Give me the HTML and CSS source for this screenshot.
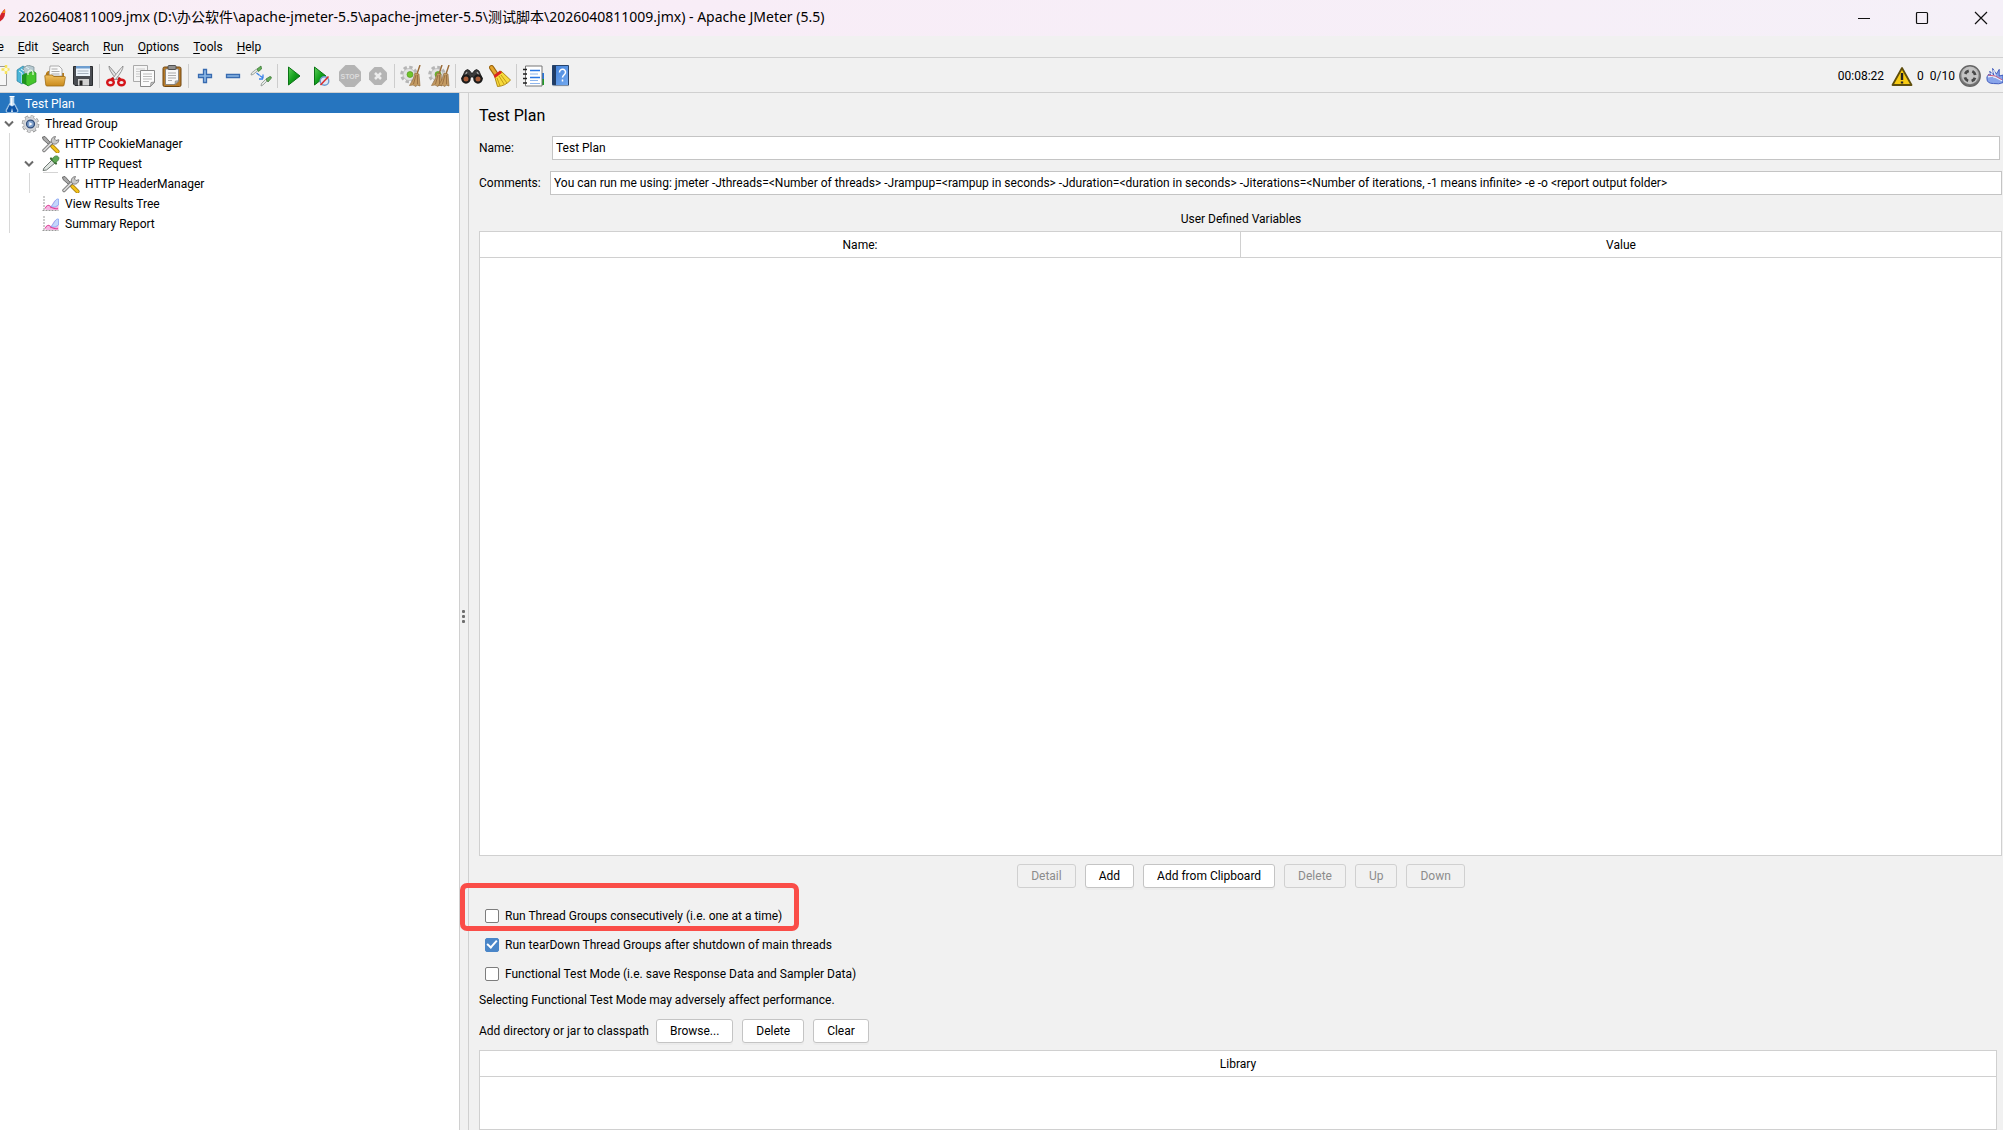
FILE: index.html
```html
<!DOCTYPE html>
<html lang="en">
<head>
<meta charset="utf-8">
<title>2026040811009.jmx - Apache JMeter (5.5)</title>
<link rel="stylesheet" href="styles.css">
</head>
<body>
<svg class="sprite" aria-hidden="true">
  <defs>
    <linearGradient id="g-green" x1="0" y1="0" x2="1" y2="1"><stop offset="0" stop-color="#5fd05a"/><stop offset=".5" stop-color="#12a01c"/><stop offset="1" stop-color="#066a10"/></linearGradient>
    <linearGradient id="g-gold" x1="0" y1="0" x2="0" y2="1"><stop offset="0" stop-color="#f0c060"/><stop offset="1" stop-color="#c98a1c"/></linearGradient>
    <linearGradient id="g-blue" x1="0" y1="0" x2="1" y2="1"><stop offset="0" stop-color="#3f7fd8"/><stop offset="1" stop-color="#74aaf0"/></linearGradient>
    <linearGradient id="g-grey" x1="0" y1="0" x2="0" y2="1"><stop offset="0" stop-color="#c8c8c8"/><stop offset="1" stop-color="#6c6c6c"/></linearGradient>
    <symbol id="i-tools" viewBox="0 0 19 18">
      <path d="M1.500 2 4 1.500 12 10.500 10.500 12 2 4.500Z" fill="#a9a9a9" stroke="#555" stroke-width=".8"/>
      <path d="M3 15.500 11.500 7" stroke="#666" stroke-width="3.400" stroke-linecap="round"/>
      <path d="M3 15.500 11.500 7" stroke="#d8d8d8" stroke-width="1.800" stroke-linecap="round"/>
      <path d="M10.500 7.500c-1-3 1-6 4-6l-1 2.500 1.500 1.500 2.800-.8c0 3-2.300 5-5.300 4.300Z" fill="#c8c8c8" stroke="#666" stroke-width=".8"/>
      <path d="m11.500 11.500 5 5" stroke="#9a7410" stroke-width="4" stroke-linecap="round"/>
      <path d="m11.500 11.500 5 5" stroke="#f3c21a" stroke-width="2.600" stroke-linecap="round"/>
    </symbol>
    <symbol id="i-chart" viewBox="0 0 18 18">
      <path d="M2.500 1v14.500M1 15.500h16" stroke="#999" stroke-width="1" stroke-dasharray="2 1"/>
      <path d="M4 15c1-4 3-5 5-3l3-5c2-3 4-1 5-1v9Z" fill="#f4b3e2"/>
      <path d="m9.500 12 4-6q2-3 3.500-2v6q-3 3-7.500 2Z" fill="#c3d6fb" stroke="#7f9df0" stroke-width=".7"/>
      <path d="M3.500 13.500C6 9 8 9.500 9.500 12.500c2-.5 2.500 2 7 1" fill="none" stroke="#dd3d97" stroke-width="1.100"/>
    </symbol>
    <symbol id="i-dropper" viewBox="0 0 19 18">
      <path d="M2 17.500h15" stroke="#d4d4d4"/>
      <path d="m2 15.500 1-2.500 8-8 3 3-8.500 7Z" fill="#dfe5e1" stroke="#6f7873"/>
      <path d="m10 3.500 5 5" stroke="#3c6b35" stroke-width="2.200" stroke-linecap="round"/>
      <path d="M11 5c1-3.500 4-5 6-3.500s.5 4.500-3 6.500Z" fill="#5ea854" stroke="#41793a" stroke-width=".8"/>
    </symbol>
    <symbol id="i-gear" viewBox="0 0 20 20">
      <circle cx="10" cy="10" r="8.200" fill="none" stroke="#8d8d8d" stroke-width="3.200" stroke-dasharray="3.740 2.700"/>
      <circle cx="10" cy="10" r="7.600" fill="#d5d7da" stroke="#9b9b9b" stroke-width=".7"/>
      <circle cx="10" cy="10" r="8" fill="none" stroke="#d5d7da" stroke-width="2.200" stroke-dasharray="2.800 3.483" stroke-dashoffset="-.4"/>
      <circle cx="10" cy="10" r="4.400" fill="#7ea0cc" stroke="#314c78" stroke-width="1.400"/>
      <path d="m8.700 7.700 3.600 2.300-3.600 2.300Z" fill="#fff"/>
    </symbol>
    <symbol id="i-flask" viewBox="0 0 14 18">
      <path d="M5 1.500h4v6l4 7.500q.5 2.500-1.500 2.500h-9Q.5 17.500 1 15l4-7.500Z" fill="#cfe4f6" stroke="#8fb9de" stroke-width=".7"/>
      <path d="m4.500 10-3 6 1 1h3.500l1-4 1 4h3.500l1-1-3-6-2.500 1.500Z" fill="#0b54a8"/>
      <path d="M4.500 1.500h5M6.300 3v7" stroke="#fff"/>
    </symbol>
    <symbol id="i-arrow" viewBox="0 0 10 8"><path d="m1 1.500 4 4 4-4" fill="none" stroke="#6a6a6a" stroke-width="2"/></symbol>
    <symbol id="i-gearbroom" viewBox="0 0 22 22">
      <circle cx="9" cy="9.500" r="7" fill="none" stroke="#b5b5b5" stroke-width="3.600" stroke-dasharray="3.200 2.298"/>
      <circle cx="9" cy="9.500" r="6" fill="#e2e2e2" stroke="#bbb" stroke-width=".8"/>
      <circle cx="10" cy="9.500" r="3" fill="#71c52b" stroke="#4b8d1a" stroke-width=".6"/>
    </symbol>
    <symbol id="i-brush" viewBox="0 0 12 22">
      <path d="M11 0 8 9" stroke="#9a6a34" stroke-width="1.400"/>
      <path d="m6 8 4 1 1 12-3-1-1 1.500L4 20l-3.500.5Q5 14 6 8Z" fill="#c39a62" stroke="#8a6536" stroke-width=".6"/>
      <path d="m7 10-2.500 9M8.500 10v9" stroke="#866037" stroke-width=".7"/>
    </symbol>
  </defs>
</svg>

<header class="titlebar">
  <svg class="feather-mark" viewBox="0 0 6 16" aria-hidden="true"><path d="M-2 14C-1 8 1 3 5 0q1 6-2 10Z" fill="#d3222a"/><path d="M2 4 5 0v4Z" fill="#f28b1d"/></svg>
  <h1 class="window-title">2026040811009.jmx (D:\办公软件\apache-jmeter-5.5\apache-jmeter-5.5\测试脚本\2026040811009.jmx) - Apache JMeter (5.5)</h1>
  <div class="window-controls">
    <button type="button" aria-label="Minimize"><svg viewBox="0 0 14 14"><path d="M1 7.500h12" stroke="#111" fill="none"/></svg></button>
    <button type="button" aria-label="Maximize"><svg viewBox="0 0 14 14"><rect x="1.500" y="1.500" width="11" height="11" rx="1" stroke="#111" stroke-width="1.200" fill="none"/></svg></button>
    <button type="button" aria-label="Close"><svg viewBox="0 0 14 14"><path d="m1 1 12 12M13 1 1 13" stroke="#111" stroke-width="1.200" fill="none"/></svg></button>
  </div>
</header>

<nav class="menubar">
  <button type="button"><u>F</u>ile</button>
  <button type="button"><u>E</u>dit</button>
  <button type="button"><u>S</u>earch</button>
  <button type="button"><u>R</u>un</button>
  <button type="button"><u>O</u>ptions</button>
  <button type="button"><u>T</u>ools</button>
  <button type="button"><u>H</u>elp</button>
</nav>

<div class="toolbar">
  <button type="button" aria-label="New"><svg viewBox="0 0 22 22"><path d="M3 1.500h15.500v19H3Z" fill="#f6f6f6" stroke="#999"/><path d="M18 0v9M13.500 4.500h8" stroke="#f6e25a" stroke-width="2.500"/><circle cx="18" cy="4.500" r="1.800" fill="#fffbd0"/></svg></button>
  <button type="button" aria-label="Templates"><svg viewBox="0 0 22 22"><path d="m1 5 6-4 3 2v13l-4 3-5-3Z" fill="#4bb6d8" stroke="#2e7f9e" stroke-width=".7"/><path d="m7 3 5-3 6 2v8H9Z" fill="#b6c9d0" stroke="#75898f" stroke-width=".7"/><path d="m3 6 3 2v10M5 4l3 2M10 2l3 2" fill="none" stroke="#e5f6fb"/><path d="m6 10 4-2 2 1v12l-6-3Z" fill="#1e9420"/><path d="m10 10 7-4 3 2v9l-8 4-2-2Z" fill="#46c52c" stroke="#1c8a1c" stroke-width=".7"/><path d="M12 10V7q3-4 5 0v3" fill="none" stroke="#e9fce0" stroke-width="1.200"/></svg></button>
  <button type="button" aria-label="Open"><svg viewBox="0 0 22 22"><path d="M2 19V8l2-2h5l1 2h10v11Z" fill="#b67a19"/><path d="M6 1h9l3 3v7H5Z" fill="#fafafa" stroke="#9b9b9b" stroke-width=".8"/><path d="M7.500 4h6M7.500 6.500h8M7.500 9h8" stroke="#aaa"/><path d="M.8 11q0-1 1-1H8l2 1.500h10.500q1 0 .8 1L20 20q0 1-1 1H3q-1 0-1.200-1Z" fill="url(#g-gold)" stroke="#a06c14" stroke-width=".8"/></svg></button>
  <button type="button" aria-label="Save"><svg viewBox="0 0 22 22"><path d="M1.500 1.500h19v19H3l-1.500-1.500Z" fill="#4a4d52" stroke="#2b2d30"/><path d="M4 1h14v10H4Z" fill="#edf4fb"/><path d="M4 1h14v2.500H4Z" fill="#6e9ed0"/><path d="M5.500 6h11M5.500 8.500h11" stroke="#a8b3bf"/><path d="M6 14h11v6.500H6Z" fill="#d2d2d2"/><path d="M7.500 15.500h3v5h-3Z" fill="#222"/></svg></button>
  <span class="separator"></span>
  <button type="button" aria-label="Cut"><svg viewBox="0 0 22 22"><path d="M4 1q-.5 4 8 14l2-2Q6 3 4 1Z" fill="#e2e2e2" stroke="#888" stroke-width=".9"/><path d="M18 1q.5 4-8 14l-2-2Q16 3 18 1Z" fill="#f0f0f0" stroke="#888" stroke-width=".9"/><path d="m8.500 13-2 2M13.500 13l2 2" stroke="#c60f14" stroke-width="3"/><ellipse cx="5.500" cy="17.500" rx="3.300" ry="2.800" fill="#eee" stroke="#d5151b" stroke-width="2.400"/><ellipse cx="16.500" cy="17.500" rx="3.300" ry="2.800" fill="#eee" stroke="#d5151b" stroke-width="2.400"/></svg></button>
  <button type="button" aria-label="Copy"><svg viewBox="0 0 22 22"><path d="M.5.500h14v16H.5Z" fill="#f5f5f5" stroke="#aaa"/><path d="M3 4h9M3 6.500h4M3 9h4M3 11.500h4" stroke="#ccc"/><path d="M7.500 5.500h14v12l-4 4h-10Z" fill="#fbfbfb" stroke="#888"/><path d="M10 9h9M10 11.500h9M10 14h9M10 16.500h6" stroke="#bbb"/><path d="m17.500 21.500.5-4 3.500-.5Z" fill="#ccc" stroke="#888" stroke-width=".8"/></svg></button>
  <button type="button" aria-label="Paste"><svg viewBox="0 0 22 22"><rect x="2" y="2" width="18" height="19.500" rx="1.500" fill="#b77a28" stroke="#704610"/><path d="M4.500 4h13v12l-3.500 3.500H4.500Z" fill="#f8f8f8" stroke="#777" stroke-width=".8"/><rect x="7" y=".5" width="8" height="4" rx="1" fill="#8f8f8f" stroke="#505050"/><path d="M7 8h8M7 10.500h8M7 13h8M7 15.500h4" stroke="#aaa"/><path d="m14 19.500.3-3.500 3.500-.3Z" fill="#bbb" stroke="#777" stroke-width=".6"/></svg></button>
  <span class="separator"></span>
  <button type="button" aria-label="Expand all"><svg viewBox="0 0 22 22"><path d="M9.500 4.500h3v5h5v3h-5v5h-3v-5h-5v-3h5Z" fill="#8db8e6" stroke="#386bb0" stroke-width="1.300"/></svg></button>
  <button type="button" aria-label="Collapse all"><svg viewBox="0 0 22 22"><path d="M4.500 9.500h13v3h-13Z" fill="#8db8e6" stroke="#386bb0" stroke-width="1.300"/></svg></button>
  <button type="button" aria-label="Toggle"><svg viewBox="0 0 22 22"><path d="m1 10 .5-2 5-4 1.500 1.500-5 4ZM11 21l.5-2.500 4-4 1.500 1.500-4 4Z" fill="#e5e9e6" stroke="#8b9690" stroke-width=".8"/><path d="m7 4 4-3 .5 3-3 2.500ZM16 14l4-2.500q2 0 1 2L18 17Z" fill="#63b058" stroke="#3f7b39" stroke-width=".8"/><path d="m6.500 8 6.500 5M13 9.500V14H8.500" fill="none" stroke="#3b83ea" stroke-width="1.300" stroke-dasharray="4 .5"/></svg></button>
  <span class="separator"></span>
  <button type="button" aria-label="Start"><svg viewBox="0 0 22 22"><path d="M5.500 2v18L17 11Z" fill="url(#g-green)" stroke="#0b7315"/></svg></button>
  <button type="button" aria-label="Start no pauses"><svg viewBox="0 0 22 22"><path d="M3.500 2v18L15 11Z" fill="url(#g-green)" stroke="#0b7315"/><circle cx="13.500" cy="16" r="4.300" fill="#dce9f7" stroke="#6d9cd0" stroke-width="1.400"/><path d="m9.500 20 8-8.500" stroke="#db2b2b" stroke-width="1.500"/></svg></button>
  <button type="button" aria-label="Stop" disabled><svg viewBox="0 0 22 22"><path d="M6.500 0h9L22 6.500v9L15.500 22h-9L0 15.500v-9Z" fill="#b4b4b4"/><text x="11" y="14" class="stop-text">STOP</text></svg></button>
  <button type="button" aria-label="Shutdown" disabled><svg viewBox="0 0 22 22"><path d="M7.500 2h7L20 7.500v7L14.500 20h-7L2 14.500v-7Z" fill="#b4b4b4"/><path d="m8 8 6 6m0-6-6 6" stroke="#ececec" stroke-width="2.500"/></svg></button>
  <span class="separator"></span>
  <button type="button" aria-label="Clear"><svg viewBox="0 0 22 22"><use href="#i-gearbroom" width="22" height="22"/><use href="#i-brush" x="9" width="12" height="22"/></svg></button>
  <button type="button" aria-label="Clear all"><svg viewBox="0 0 22 22"><use href="#i-gearbroom" width="22" height="22"/><use href="#i-brush" x="3" width="12" height="22"/><use href="#i-brush" x="10" width="12" height="22"/></svg></button>
  <span class="separator"></span>
  <button type="button" aria-label="Search"><svg viewBox="0 0 22 22"><path d="M4 6q2.500-3 5 0l1 2h2l1-2q2.500-3 5 0l3.500 8h-8L12 12h-2l-1.500 2H.5Z" fill="#3b3b3b" stroke="#111" stroke-width=".7"/><path d="m6 7-2.500 4M16 7l2.500 4" stroke="#aaa" stroke-width="1.300"/><circle cx="5" cy="14" r="3.600" fill="#a85c38" stroke="#1b1b1b" stroke-width="2.200"/><circle cx="17" cy="14" r="3.600" fill="#a85c38" stroke="#1b1b1b" stroke-width="2.200"/></svg></button>
  <button type="button" aria-label="Reset search"><svg viewBox="0 0 22 22"><path d="m2.500 2.500 4 6" stroke="#9c650c" stroke-width="5" stroke-linecap="round"/><path d="m2.500 2.500 4 6" stroke="#e4a62e" stroke-width="3" stroke-linecap="round"/><path d="M5.500 11 12 6l9.500 9q-5 6-13 6.500Z" fill="#f7da3c" stroke="#a98009" stroke-width=".9"/><path d="m8 13 3 8M10 11l5 8M12 10l6 8" stroke="#c19b16"/><path d="m4.500 10.500 6.500-5 2 2.300-7 5.200Z" fill="#dc251f"/></svg></button>
  <span class="separator"></span>
  <button type="button" aria-label="Function helper"><svg viewBox="0 0 22 22"><path d="M20 8h2v6h-2Z" fill="#2676de"/><path d="M20 14h2v6h-2Z" fill="#1f9a27"/><path d="M3.500 1h16.500v20H3.500Z" fill="#fff" stroke="#777"/><path d="M8 5.500h10M8 12.500h10" stroke="#2b78e4" stroke-width="1.400"/><path d="M8 9h8M8 15.500h8M8 18.500h10" stroke="#8fb6ec"/><path d="M1 4.500h4M1 9h4M1 13.500h4M1 18h4" stroke="#222" stroke-width="1.500"/></svg></button>
  <button type="button" aria-label="Help"><svg viewBox="0 0 22 22"><path d="M2.500.500h16v20h-14l-2-1Z" fill="url(#g-blue)" stroke="#27446d"/><path d="M2.500.500h3.500v20H2.500Z" fill="#213d66"/><path d="M3 21h16" stroke="#ddd"/><path d="M9.500 7.500c0-4.500 6.500-4 6 0-.3 2.500-3 2.500-3 5M12.500 14.500v2" fill="none" stroke="#fff" stroke-width="1.500"/></svg></button>

  <div class="status">
    <span class="elapsed">00:08:22</span>
    <button type="button" class="warnings"><svg viewBox="0 0 22 22"><path d="M11 3 1.500 20h19Z" fill="#f8cb12" stroke="#5f4e0b" stroke-width="1.800" stroke-linejoin="round"/><path d="M11 8v7M11 16.500v2" stroke="#222" stroke-width="2.400"/></svg><span>0</span></button>
    <span class="threads">0/10</span>
    <svg class="status-icon" viewBox="0 0 22 22"><circle cx="11" cy="11" r="10.200" fill="url(#g-grey)" stroke="#666" stroke-width="1.400"/><circle cx="11" cy="11" r="8.200" fill="#c4c4c4"/><circle cx="11" cy="11" r="5.300" fill="none" stroke="#494949" stroke-width="2.800" stroke-dasharray="4.600 3.725" stroke-dashoffset="-1.800"/></svg>
    <svg class="logo" viewBox="0 0 18 22"><path d="M1 12 3 9l2 2-1-5 4 4-1-7 4 6 3-5v7l4-1v8q-4 2-10 1-7 0-7-5Z" fill="#88a4ea" stroke="#2f4cb5" stroke-width=".9"/><path d="m2 12 5-1 10 5M8 5l2 6M5 8l4 5" fill="none" stroke="#e8eefc" stroke-width="1.400"/><path d="m2 10 8 1 7 4" fill="none" stroke="#d25b79"/></svg>
  </div>
</div>

<main class="workspace">
  <ul class="tree">
    <li class="node root selected"><svg class="flask"><use href="#i-flask"/></svg>Test Plan</li>
    <li>
      <div class="node"><svg class="twisty"><use href="#i-arrow"/></svg><svg class="icon"><use href="#i-gear"/></svg>Thread Group</div>
      <ul class="branch">
        <li class="node leaf"><svg class="icon"><use href="#i-tools"/></svg>HTTP CookieManager</li>
        <li>
          <div class="node"><svg class="twisty"><use href="#i-arrow"/></svg><svg class="icon"><use href="#i-dropper"/></svg>HTTP Request</div>
          <ul class="branch">
            <li class="node leaf"><svg class="icon"><use href="#i-tools"/></svg>HTTP HeaderManager</li>
          </ul>
        </li>
        <li class="node leaf"><svg class="icon"><use href="#i-chart"/></svg>View Results Tree</li>
        <li class="node leaf"><svg class="icon"><use href="#i-chart"/></svg>Summary Report</li>
      </ul>
    </li>
  </ul>

  <div class="splitter"><i></i><i></i><i></i></div>

  <section class="panel">
    <h2>Test Plan</h2>
    <div class="field name-field"><label for="name">Name:</label><input id="name" type="text" value="Test Plan"></div>
    <div class="field"><label for="comments">Comments:</label><input id="comments" type="text" value="You can run me using: jmeter -Jthreads=&lt;Number of threads&gt; -Jrampup=&lt;rampup in seconds&gt; -Jduration=&lt;duration in seconds&gt; -Jiterations=&lt;Number of iterations, -1 means infinite&gt; -e -o &lt;report output folder&gt;"></div>

    <h3>User Defined Variables</h3>
    <div class="grid-box variables">
      <table aria-label="User Defined Variables"><thead><tr><th>Name:</th><th>Value</th></tr></thead></table>
    </div>
    <div class="buttons">
      <button type="button" disabled>Detail</button>
      <button type="button">Add</button>
      <button type="button">Add from Clipboard</button>
      <button type="button" disabled>Delete</button>
      <button type="button" disabled>Up</button>
      <button type="button" disabled>Down</button>
    </div>

    <div class="options">
      <div class="marked"><label><input type="checkbox">Run Thread Groups consecutively (i.e. one at a time)</label></div>
      <label><input type="checkbox" checked>Run tearDown Thread Groups after shutdown of main threads</label>
      <label><input type="checkbox">Functional Test Mode (i.e. save Response Data and Sampler Data)</label>
    </div>
    <p>Selecting Functional Test Mode may adversely affect performance.</p>
    <div class="classpath">
      <span>Add directory or jar to classpath</span>
      <button type="button">Browse...</button>
      <button type="button">Delete</button>
      <button type="button">Clear</button>
    </div>
    <div class="grid-box library">
      <table aria-label="Classpath"><thead><tr><th>Library</th></tr></thead></table>
    </div>
  </section>
</main>
</body>
</html>
```
FILE: styles.css
```css
*, *::before, *::after { box-sizing: border-box; }

body {
  margin: 0;
  min-height: 100vh;
  display: flex;
  flex-direction: column;
  overflow-x: hidden;
  background: #f1f1f1;
  color: #000;
  font: 12px/20px Roboto, "Noto Sans CJK SC", sans-serif;
}

button, input { font: inherit; color: inherit; }
h1, h2, h3, p, ul { margin: 0; padding: 0; font-weight: 400; }
ul { list-style: none; }
.sprite { position: absolute; width: 0; height: 0; }

/* Title bar */
.titlebar {
  display: flex;
  align-items: center;
  height: 36px;
  padding-bottom: 2px;
  background: linear-gradient(90deg, #f9eef6, #f8edf7 35%, #f5f0f8);
}
.feather-mark { width: 6px; height: 16px; margin-right: 12px; }
.window-title {
  flex: 1;
  font: 14px/20px "Noto Sans", "Noto Sans CJK SC", sans-serif;
  white-space: nowrap;
}
.window-controls { display: flex; }
.window-controls button {
  width: 58px;
  height: 34px;
  padding: 0;
  border: 0;
  background: none;
}
.window-controls button:last-child { width: 44px; margin-left: 8px; }
.window-controls svg { width: 14px; height: 14px; vertical-align: middle; }

/* Menu bar */
.menubar {
  display: flex;
  height: 22px;
  margin-left: -22px;
  border-bottom: 1px solid #d0d0d0;
}
.menubar button {
  padding: 0 7px;
  border: 0;
  background: none;
  line-height: 20px;
}
.menubar u { text-underline-offset: 2px; }

/* Tool bar */
.toolbar {
  display: flex;
  align-items: center;
  height: 35px;
  padding-top: 1px;
  border-bottom: 1px solid #d0d0d0;
}
.toolbar > button {
  flex: none;
  width: 28px;
  height: 28px;
  padding: 3px;
  border: 0;
  background: none;
}
.toolbar > button:first-child { margin-left: -15px; }
.toolbar > button svg { display: block; width: 22px; height: 22px; }
.separator {
  flex: none;
  width: 1px;
  height: 24px;
  margin: 0 2px;
  background: #cdcdcd;
}
.stop-text {
  fill: #dcdcdc;
  font: 700 7px "Liberation Sans", sans-serif;
  text-anchor: middle;
}
.status { display: flex; align-items: center; margin-left: auto; }
.warnings {
  display: flex;
  align-items: center;
  gap: 4px;
  margin: 0 6px 0 7px;
  padding: 0;
  border: 0;
  background: none;
}
.warnings svg, .status-icon { width: 22px; height: 22px; }
.status-icon { margin: 0 5px 0 4px; }
.logo { width: 17px; height: 22px; }

/* Workspace */
.workspace { flex: 1; display: flex; }
.tree {
  flex: none;
  width: 460px;
  background: #fff;
  border-right: 1px solid #d0d0d0;
}
.node {
  display: flex;
  align-items: center;
  height: 20px;
  padding-top: 1px;
  white-space: nowrap;
}
.selected { background: #2675bf; color: #fff; }
.root { padding-left: 5px; }
.flask { width: 14px; height: 18px; margin-right: 6px; }
.twisty { width: 10px; height: 8px; margin: 0 7px 0 4px; }
.icon { width: 19px; height: 18px; margin-right: 5px; }
.branch { margin-left: 9px; padding-left: 10px; border-left: 1px solid #d8d8d8; }
.leaf { padding-left: 21px; }

.splitter {
  flex: none;
  width: 8px;
  display: flex;
  flex-direction: column;
  align-items: center;
  justify-content: center;
  gap: 2px;
  padding: 10px 1px 0 0;
}
.splitter i { width: 3px; height: 3px; border-radius: 1px; background: #6e6e6e; }

/* Editor panel */
.panel {
  flex: 1;
  min-width: 0;
  display: flex;
  flex-direction: column;
  padding: 11px 0 0 10px;
  border-left: 1px solid #d0d0d0;
}
.panel h2 { font-size: 16px; line-height: 24px; margin-bottom: 8px; }
.panel h3 { font-size: 12px; text-align: center; margin: 3px 0 2px; }
.field { display: flex; align-items: center; margin-bottom: 11px; padding-right: 1px; }
.field label { flex: none; width: 71px; }
.name-field { padding-right: 3px; }
.name-field label { width: 73px; }
.field input {
  flex: 1;
  min-width: 0;
  height: 24px;
  padding: 0 3px;
  border: 1px solid #c4c4c4;
  background: #fff;
}

.grid-box { background: #fff; border: 1px solid #d0d0d0; }
.grid-box table { width: 100%; border-collapse: collapse; table-layout: fixed; }
.grid-box th {
  height: 25px;
  padding: 2px 0 0;
  font-weight: 400;
  text-align: center;
  border-bottom: 1px solid #d0d0d0;
}
.grid-box th + th { border-left: 1px solid #d0d0d0; }
.variables { flex: 1; min-height: 120px; margin-right: 1px; }
.library { height: 80px; margin-right: 6px; }

.buttons { display: flex; justify-content: center; gap: 9px; padding: 8px 0 13px; }
.buttons button, .classpath button {
  height: 24px;
  padding: 0 13px;
  line-height: 20px;
  background: #fff;
  border: 1px solid #c4c4c4;
  border-radius: 3px;
  box-shadow: 0 2px 0 #ebebeb;
}
.buttons button:disabled {
  background: #f1f1f1;
  border-color: #d0d0d0;
  color: #8c8c8c;
  box-shadow: none;
}

.options label { display: flex; align-items: center; height: 29px; padding-left: 6px; }
.options input {
  appearance: none;
  width: 14px;
  height: 14px;
  margin: 0 6px 0 0;
  border: 1px solid #7d7d7d;
  border-radius: 2px;
  background: #fff;
}
.options input:checked {
  border-color: #4a86c8;
  background: #4a86c8;
  display: grid;
  place-items: center;
}
.options input:checked::before {
  content: "";
  width: 10px;
  height: 6px;
  margin-bottom: 3px;
  border: solid #fff;
  border-width: 0 0 2px 2px;
  rotate: -48deg;
}
.marked { position: relative; }
.marked::after {
  content: "";
  position: absolute;
  left: -19px;
  top: -18px;
  width: 339px;
  height: 48px;
  border: 5px solid #fa4d48;
  border-radius: 7px;
  pointer-events: none;
}
.panel p { margin: 2px 0 9px; }
.classpath { display: flex; align-items: center; gap: 9px; margin-bottom: 7px; }
.classpath span { margin-right: -2px; }
```
